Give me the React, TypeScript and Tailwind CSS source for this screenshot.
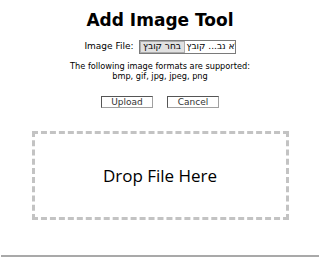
export default function App() {
  return (
    <div className="flex min-h-[258px] w-[320px] flex-col items-center bg-white font-['DejaVu_Sans',Verdana,sans-serif] text-black">
      <h1 className="mt-[10px] text-[17px] font-bold leading-[20px]">Add Image Tool</h1>

      <div className="mt-[10px] flex items-center gap-[5px] text-[9px]">
        <span>Image File:</span>
        <div className="flex h-[14px] w-[97px] items-center overflow-hidden border border-[#7a7a7a] bg-white">
          <span className="flex h-[12px] w-[45px] shrink-0 items-center justify-center border border-[#adadad] bg-[#e1e1e1] text-[9px]">
            בחר קובץ
          </span>
          <span dir="rtl" className="ml-[2px] whitespace-nowrap text-[9px]">
            לא נב... קובץ
          </span>
        </div>
      </div>

      <div className="mt-[7px] text-center text-[8.2px] leading-[10px]">
        <p>The following image formats are supported:</p>
        <p>bmp, gif, jpg, jpeg, png</p>
      </div>

      <div className="mt-[15px] flex gap-[14px] text-[9px]">
        <button className="h-[12px] w-[52px] border border-t-[#555] border-l-[#555] border-r-[#a0a0a0] border-b-[#a0a0a0] bg-white leading-none text-[#333]">
          Upload
        </button>
        <button className="h-[12px] w-[52px] border border-t-[#555] border-l-[#555] border-r-[#a0a0a0] border-b-[#a0a0a0] bg-white leading-none text-[#333]">
          Cancel
        </button>
      </div>

      <div className="mt-[23px] flex h-[89px] w-[257px] items-center justify-center border-[3px] border-dashed border-[#c3c3c3]">
        <span className="font-['Open_Sans',sans-serif] text-[17px]">Drop File Here</span>
      </div>

      <hr className="mx-[1px] mt-auto mb-[1px] w-[318px] border-t-2 border-[#a9a9a9]" />
    </div>
  );
}
